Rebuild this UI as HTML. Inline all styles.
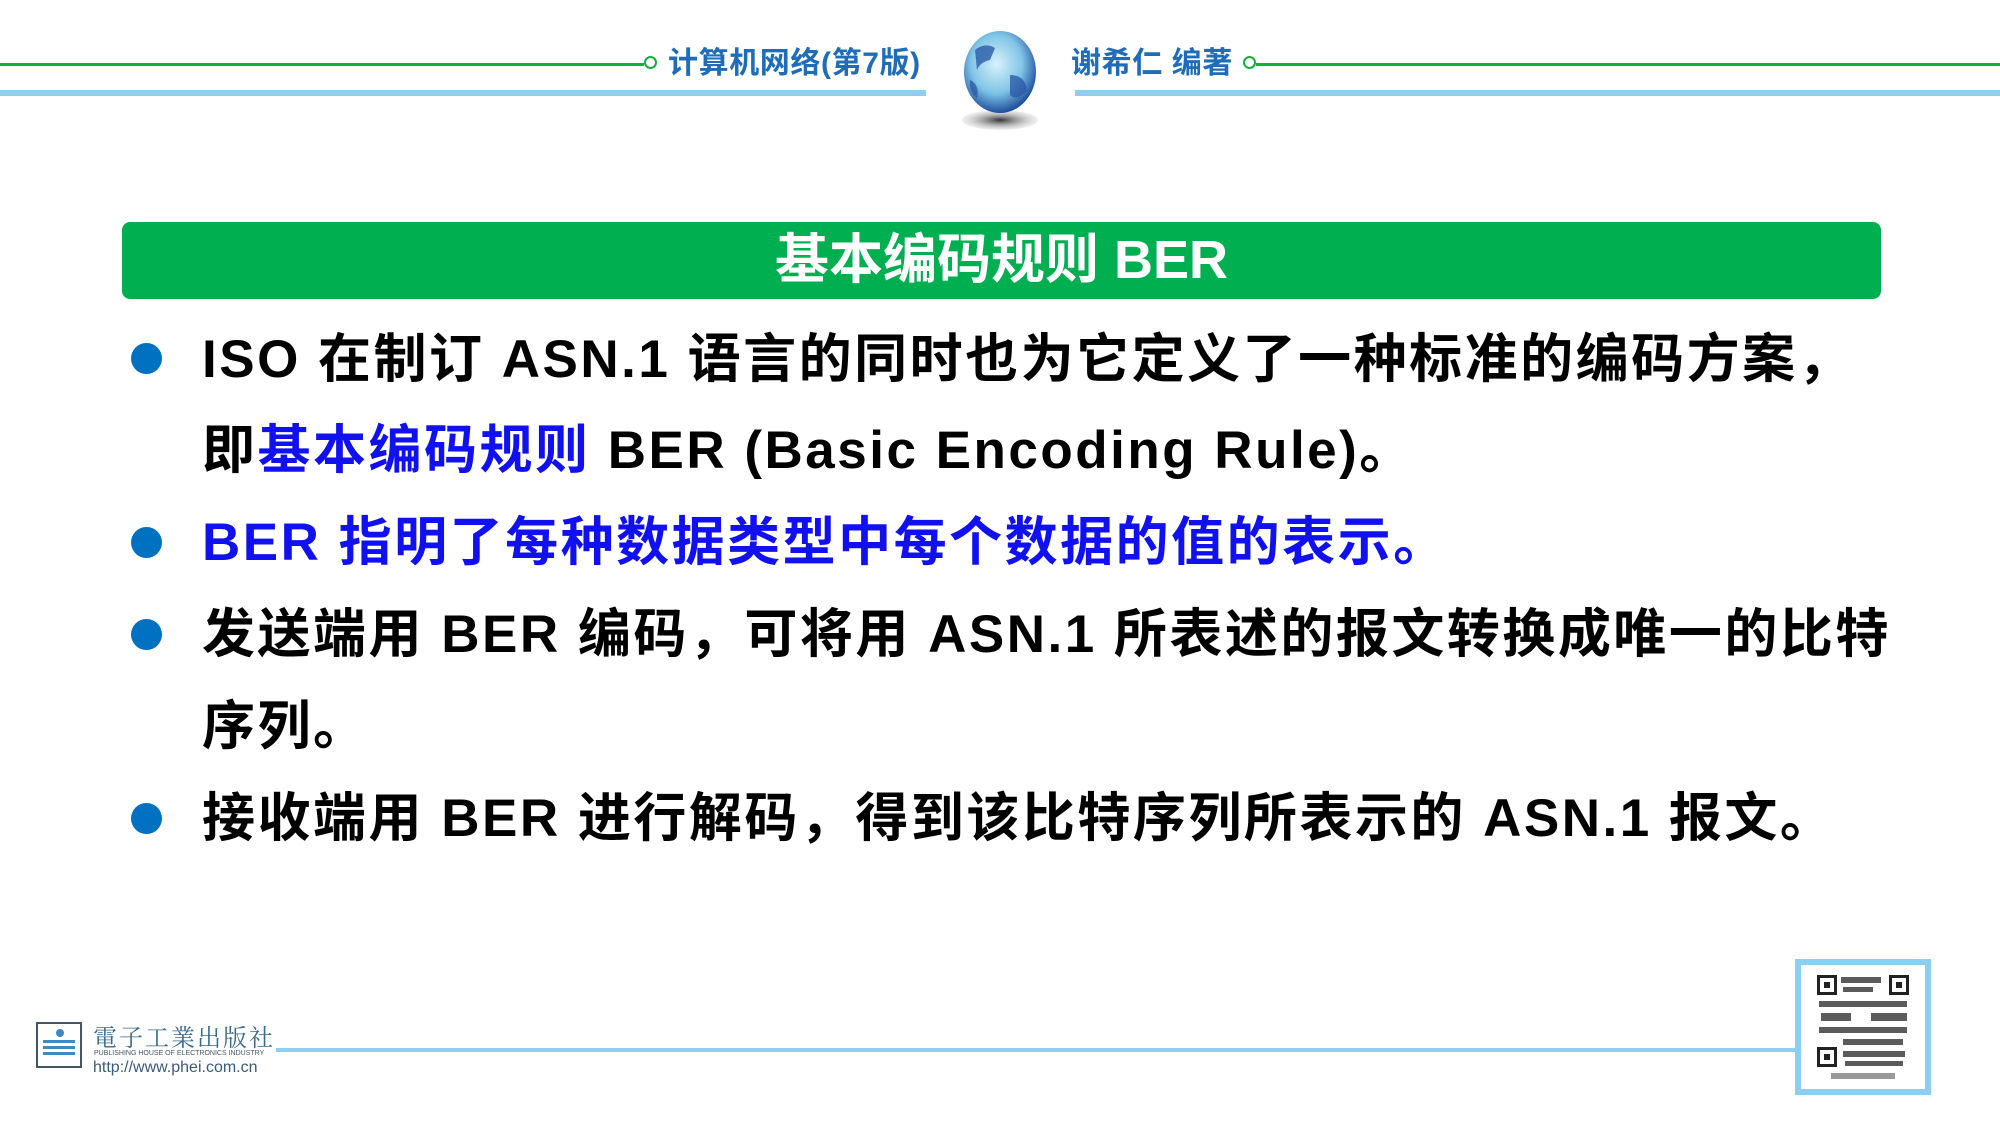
<!DOCTYPE html>
<html><head><meta charset="utf-8"><style>
html,body{margin:0;padding:0;background:#fff;}
body{width:2000px;height:1125px;position:relative;overflow:hidden;font-family:"Liberation Sans","Noto Sans CJK SC",sans-serif;}
.abs{position:absolute;}
.hd{font-weight:bold;color:#1f6db8;font-size:30px;line-height:40px;white-space:nowrap;letter-spacing:0.6px;}
.ln{position:absolute;left:202px;font-size:53px;font-weight:bold;color:#000;white-space:nowrap;line-height:70px;letter-spacing:2.5px;}
.dot{position:absolute;left:131px;width:31px;height:31px;border-radius:50%;background:#0070c0;}
.b{color:#1010f0;}
</style></head><body>
<div class="abs" style="left:0;top:63px;width:644px;height:3px;background:#10b040"></div>
<div class="abs" style="left:644px;top:56px;width:13px;height:13px;border:2.5px solid #10b040;border-radius:50%;box-sizing:border-box"></div>
<div class="abs" style="left:0;top:90px;width:926px;height:6px;background:#8ccff0"></div>
<div class="abs hd" style="left:668px;top:44px">计算机网络(第7版)</div>
<div class="abs hd" style="left:1071px;top:44px">谢希仁 编著</div>
<div class="abs" style="left:1243px;top:56px;width:13px;height:13px;border:2.5px solid #10b040;border-radius:50%;box-sizing:border-box"></div>
<div class="abs" style="left:1256px;top:63px;width:744px;height:3px;background:#10b040"></div>
<div class="abs" style="left:1075px;top:90px;width:925px;height:6px;background:#8ccff0"></div>
<svg class="abs" style="left:955px;top:30px" width="90" height="105">
<defs><radialGradient id="g" cx="0.45" cy="0.4" r="0.6"><stop offset="0" stop-color="#d8f2fb"/><stop offset="0.6" stop-color="#7fc4e6"/><stop offset="1" stop-color="#1f4f9e"/></radialGradient>
<radialGradient id="s" cx="0.5" cy="0.5" r="0.5"><stop offset="0" stop-color="#333"/><stop offset="1" stop-color="#ccc" stop-opacity="0.3"/></radialGradient></defs>
<ellipse cx="45" cy="90" rx="38" ry="10" fill="url(#s)"/>
<ellipse cx="45" cy="42" rx="36" ry="41" fill="url(#g)"/>
<path d="M20 20 Q30 12 40 18 L35 30 Q25 32 22 40 Z M55 45 Q70 45 72 60 Q62 72 55 65 Z M15 50 Q25 55 22 68 Q14 62 15 50Z" fill="#2a5aa8" opacity="0.8"/>
</svg>
<div class="abs" style="left:122px;top:222px;width:1759px;height:77px;background:#00b050;border-radius:8px;color:#fff;font-weight:bold;font-size:54px;line-height:77px;text-align:center">基本编码规则 BER</div>
<div class="dot" style="top:343px"></div>
<div class="ln" style="top:325px">ISO 在制订 ASN.1 语言的同时也为它定义了一种标准的编码方案，</div>
<div class="ln" style="top:416px">即<span class="b">基本编码规则</span> BER (Basic Encoding Rule)。</div>
<div class="dot" style="top:527px"></div>
<div class="ln b" style="top:508px">BER 指明了每种数据类型中每个数据的值的表示。</div>
<div class="dot" style="top:619px"></div>
<div class="ln" style="top:600px">发送端用 BER 编码，可将用 ASN.1 所表述的报文转换成唯一的比特</div>
<div class="ln" style="top:692px">序列。</div>
<div class="dot" style="top:803px"></div>
<div class="ln" style="top:784px">接收端用 BER 进行解码，得到该比特序列所表示的 ASN.1 报文。</div>
<div class="abs" style="left:276px;top:1048px;width:1520px;height:4px;background:#8ccff0"></div>
<div class="abs" style="left:36px;top:1022px;width:46px;height:46px;border:2px solid #456;box-sizing:border-box;background:#fff">
<div style="position:absolute;left:18px;top:5px;width:8px;height:8px;border-radius:50%;background:#3a8ac8"></div>
<div style="position:absolute;left:5px;top:16px;width:32px;height:18px;background:repeating-linear-gradient(#3a8ac8 0 3px,#fff 3px 6px)"></div>
</div>
<div class="abs" style="left:93px;top:1018px;font-size:24px;color:#3a6a8a;font-family:'Noto Serif CJK SC',serif;letter-spacing:2px;white-space:nowrap">電子工業出版社</div>
<div class="abs" style="left:94px;top:1050px;font-size:7px;color:#456;white-space:nowrap">PUBLISHING HOUSE OF ELECTRONICS INDUSTRY</div>
<div class="abs" style="left:93px;top:1059px;font-size:16px;color:#3a5a7a;white-space:nowrap">http://www.phei.com.cn</div>
<div class="abs" style="left:1795px;top:959px;width:136px;height:136px;border:6px solid #8ccff4;box-sizing:border-box;background:#fff">
<svg width="124" height="124" style="position:absolute;left:0;top:0">
<g fill="#222">
<rect x="16" y="10" width="20" height="20"/><rect x="88" y="10" width="20" height="20"/><rect x="16" y="82" width="20" height="20"/>
</g>
<g fill="#fff"><rect x="19" y="13" width="14" height="14"/><rect x="91" y="13" width="14" height="14"/><rect x="19" y="85" width="14" height="14"/></g>
<g fill="#222"><rect x="23" y="17" width="6" height="6"/><rect x="95" y="17" width="6" height="6"/><rect x="23" y="89" width="6" height="6"/></g>
<g fill="#333" opacity="0.8">
<rect x="40" y="12" width="40" height="6"/><rect x="42" y="22" width="30" height="5"/><rect x="18" y="36" width="88" height="6"/><rect x="20" y="48" width="30" height="8"/><rect x="70" y="48" width="36" height="8"/><rect x="18" y="62" width="88" height="6"/><rect x="42" y="74" width="60" height="6"/><rect x="42" y="86" width="62" height="6"/><rect x="44" y="96" width="58" height="5"/>
</g>
<rect x="30" y="108" width="64" height="6" fill="#999"/>
</svg></div>
</body></html>
